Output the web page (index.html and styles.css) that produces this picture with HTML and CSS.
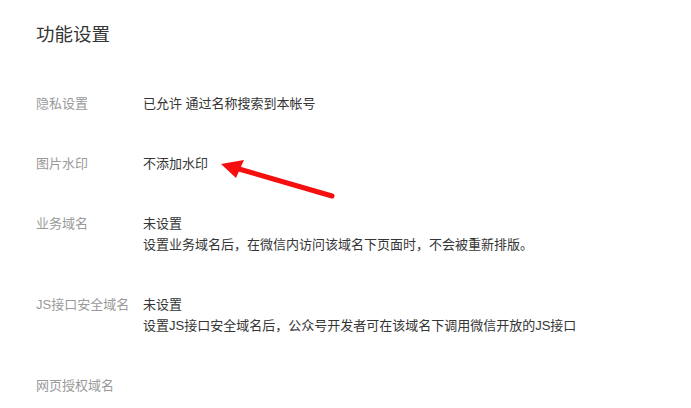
FILE: index.html
```html
<!DOCTYPE html>
<html lang="zh-CN">
<head>
<meta charset="utf-8">
<title>功能设置</title>
<link rel="stylesheet" href="styles.css">
</head>
<body>
<div class="page">
  <h1 class="title">功能设置</h1>
  <div class="list">
    <div class="row">
      <div class="label">隐私设置</div>
      <div class="value"><div>已允许 通过名称搜索到本帐号</div></div>
    </div>
    <div class="row">
      <div class="label">图片水印</div>
      <div class="value"><div>不添加水印</div></div>
    </div>
    <div class="row">
      <div class="label">业务域名</div>
      <div class="value">
        <div>未设置</div>
        <div>设置业务域名后，在微信内访问该域名下页面时，不会被重新排版。</div>
      </div>
    </div>
    <div class="row">
      <div class="label">JS接口安全域名</div>
      <div class="value">
        <div>未设置</div>
        <div>设置JS接口安全域名后，公众号开发者可在该域名下调用微信开放的JS接口</div>
      </div>
    </div>
    <div class="row">
      <div class="label">网页授权域名</div>
      <div class="value"></div>
    </div>
  </div>
  <svg class="arrow" width="691" height="408" viewBox="0 0 691 408" xmlns="http://www.w3.org/2000/svg">
    <line x1="332" y1="196" x2="232" y2="167" stroke="#f50f0f" stroke-width="5" stroke-linecap="round"/>
    <polygon points="221,164 244,160 236,178" fill="#f50f0f"/>
  </svg>
</div>
</body>
</html>
```
FILE: styles.css
```css
html, body {
  margin: 0;
  padding: 0;
  background: #ffffff;
}
body {
  font-family: "Liberation Sans", "Noto Sans CJK SC", sans-serif;
  width: 691px;
  height: 408px;
  overflow: hidden;
  text-spacing-trim: space-all;
}
.page {
  position: relative;
  padding: 23px 0 0 36px;
}
.title {
  margin: 0;
  font-size: 18.5px;
  font-weight: normal;
  line-height: 24px;
  color: #353535;
}
.list {
  margin-top: 46px;
  display: flex;
  flex-direction: column;
  gap: 39px;
}
.row {
  display: flex;
  font-size: 13px;
  line-height: 21px;
}
.label {
  width: 107px;
  flex: none;
  color: #9a9a9a;
}
.value {
  color: #353535;
  min-height: 21px;
}
.arrow {
  position: absolute;
  left: 0;
  top: 0;
  pointer-events: none;
}
```
